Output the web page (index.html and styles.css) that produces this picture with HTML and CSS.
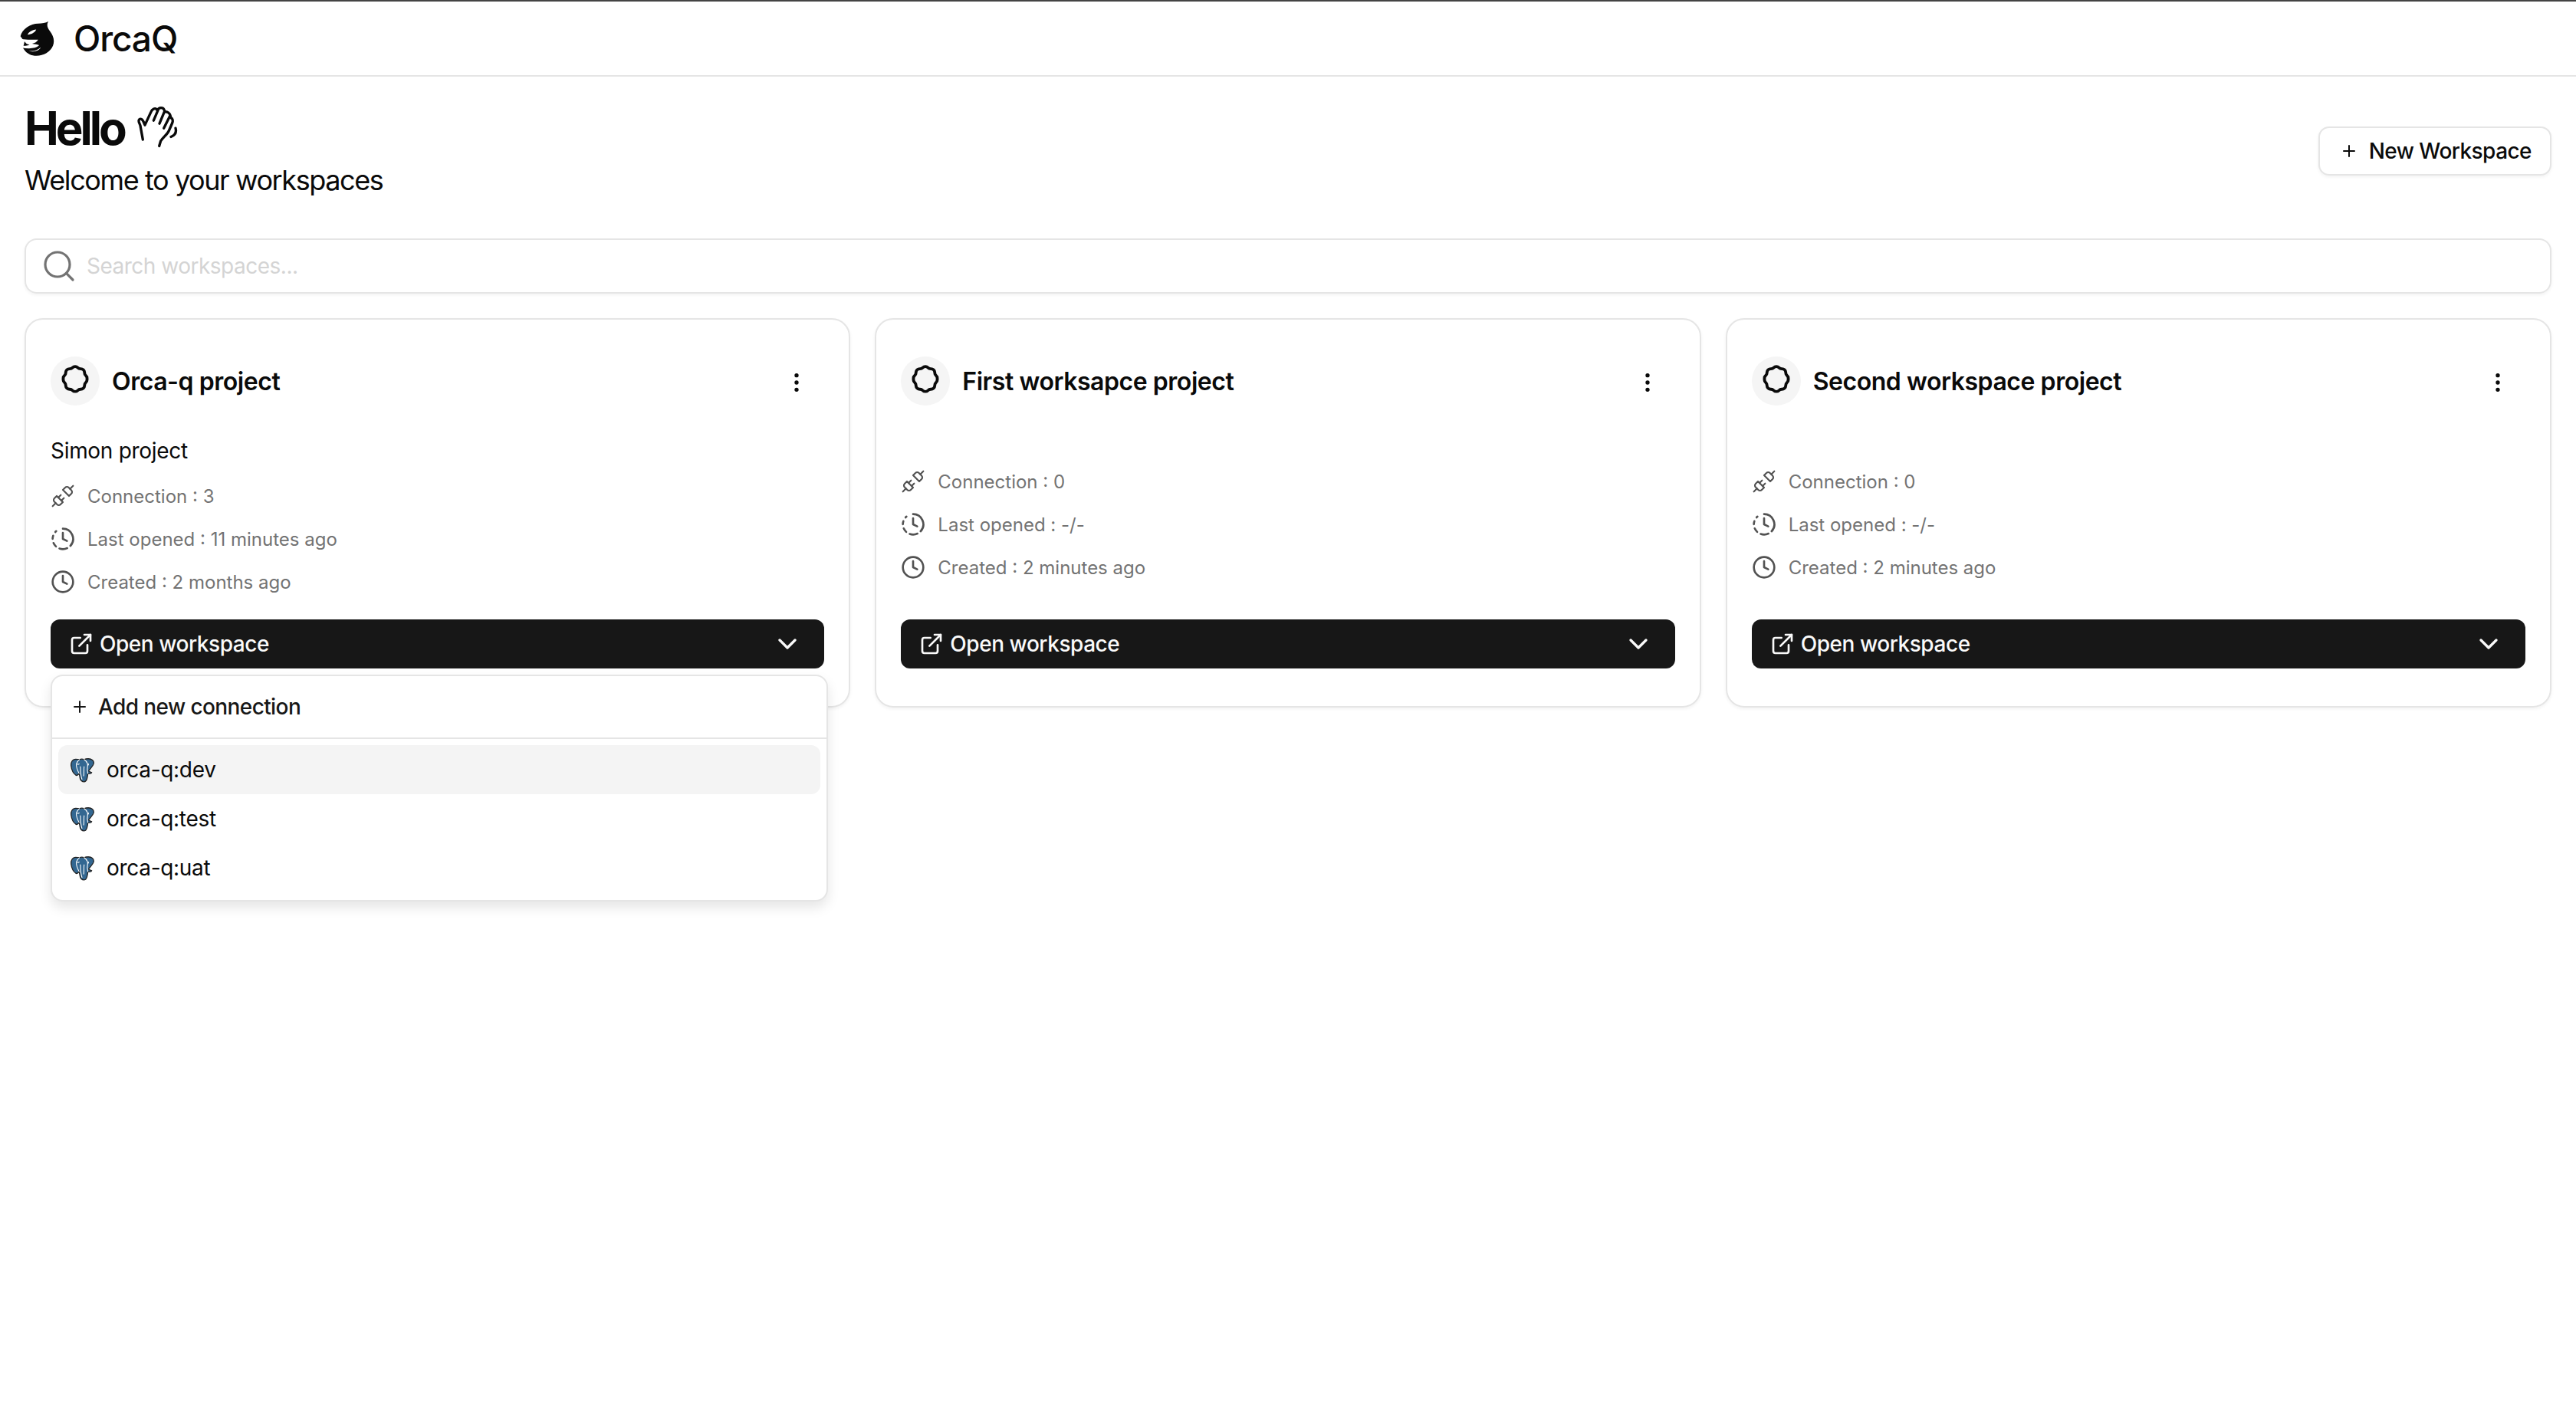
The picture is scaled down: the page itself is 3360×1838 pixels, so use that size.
FILE: index.html
```html
<!DOCTYPE html>
<html lang="en">
<head>
  <meta charset="UTF-8" />
  <title>OrcaQ</title>
  <link rel="stylesheet" href="styles.css">
</head>
<body>
  <svg class="icon-defs" width="0" height="0">
    <defs>
      <symbol id="i-badge" viewBox="0 0 24 24">
        <path d="M10.2 2.9a2.6 2.6 0 0 1 3.6 0 2.6 2.6 0 0 0 2 .8 2.6 2.6 0 0 1 2.6 2.5 2.6 2.6 0 0 0 .8 2 2.6 2.6 0 0 1 .9 2.1v.7a2.6 2.6 0 0 1-.9 2.1 2.6 2.6 0 0 0-.8 2 2.6 2.6 0 0 1-2.6 2.500 2.6 2.6 0 0 0-2 .8 2.6 2.6 0 0 1-3.6 0 2.6 2.6 0 0 0-2-.8 2.6 2.6 0 0 1-2.6-2.500 2.6 2.6 0 0 0-.8-2 2.6 2.6 0 0 1-.9-2.1v-.7a2.6 2.6 0 0 1 .9-2.1 2.6 2.6 0 0 0 .8-2 2.6 2.6 0 0 1 2.6-2.500 2.6 2.6 0 0 0 2-.8Z"/>
      </symbol>
      <symbol id="i-dots" viewBox="0 0 24 24">
        <circle cx="12" cy="5" r="1"/><circle cx="12" cy="12" r="1"/><circle cx="12" cy="19" r="1"/>
      </symbol>
      <symbol id="i-unplug" viewBox="0 0 24 24">
        <path d="m19 5 3-3"/><path d="m2 22 3-3"/>
        <path d="M6.3 20.3a2.4 2.4 0 0 0 3.4 0L12 18l-6-6-2.3 2.3a2.4 2.4 0 0 0 0 3.4Z"/>
        <path d="M7.5 13.5 10 11"/><path d="M10.5 16.5 13 14"/>
        <path d="m12 6 6 6 2.3-2.3a2.4 2.4 0 0 0 0-3.4l-2.6-2.6a2.4 2.4 0 0 0-3.4 0Z"/>
      </symbol>
      <symbol id="i-clock-fading" viewBox="0 0 24 24">
        <path d="M12 2a10 10 0 0 1 7.38 16.75"/><path d="M12 6v6l4 2"/>
        <path d="M2.5 8.875a10 10 0 0 0-.5 3"/><path d="M2.83 16a10 10 0 0 0 2.43 3.4"/>
        <path d="M4.636 5.235a10 10 0 0 1 .891-.857"/><path d="M8.644 21.42a10 10 0 0 0 7.631-.38"/>
      </symbol>
      <symbol id="i-clock" viewBox="0 0 24 24">
        <circle cx="12" cy="12" r="10"/><path d="M12 6v6l4 2"/>
      </symbol>
      <symbol id="i-external" viewBox="0 0 24 24">
        <path d="M15 3h6v6"/><path d="M10 14 21 3"/>
        <path d="M18 13v6a2 2 0 0 1-2 2H5a2 2 0 0 1-2-2V8a2 2 0 0 1 2-2h6"/>
      </symbol>
      <symbol id="i-chevron" viewBox="0 0 24 24">
        <path d="m6 9 6 6 6-6"/>
      </symbol>
      <symbol id="i-plus" viewBox="0 0 24 24">
        <path d="M5 12h14"/><path d="M12 5v14"/>
      </symbol>
      <symbol id="i-postgres" viewBox="0 0 32 32">
        <path class="pg-body" d="M8 3C4 3 2 7 2.500 11c.5 4 2.500 9 5.500 11 1 1 3 0 4-2 .5 2 1 4 1 5 .5 3 2 5 5 5s3.500-3 4-6l.5-4c1.500.5 4 .5 4.500-1-1-.5-3-1-3.500-2 1.500-2.500 5.500-6 6-9 .5-3-2.500-5.500-6.500-5.500-2 0-4 .5-5 1-1.500-.7-4-.7-5.500 0C11 3 9.500 3 8 3Z"/>
        <path class="pg-line" d="M12.500 3.500C9 6 8 10 9.500 14c1 3 1.500 4 2.500 6M18 3.500c3 2 5 5.500 4 9.500-.5 2 0 4 .5 7M13.500 12c.5 3 0 6 .5 8 .5 2.500.5 5 1.500 7M18 12c-.5 3 0 8-.5 11M23 8.500c.5.800.2 1.500-.5 1.500M10 9c1 .5 1.800.2 2-.5"/>
      </symbol>
    </defs>
  </svg>

  <header class="topbar">
    <svg class="logo" viewBox="18 18 136 140">
      <path d="M130 20c-8 12-4 24 6 38 14 18 20 38 12 58-10 26-42 42-72 39-20-2-36-13-46-31l6-24-16-22c6-28 40-50 70-50 15 0 30-2 40-8Z"/>
      <path class="logo-cut" d="M48 72c4-10 18-18 34-20-3 10-18 20-34 20Z"/>
      <path class="logo-cut" d="M16 86c16 8 46 4 74 6-4 8-14 14-24 16 10 2 20 2 28 6-14 14-42 14-66 10l-14-2 8-6c12 0 24 0 34-4-10-2-16-6-18-12-8 2-16-4-22-14Z"/>
      <path class="logo-cut" d="M54 134c14 6 32 0 46-12-6 14-32 22-46 12Z"/>
    </svg>
    <span class="brand">OrcaQ</span>
  </header>

  <main class="page">
    <section class="page-head">
      <div>
        <h1 class="hello">Hello
          <svg class="hand" viewBox="55 50 165 170">
            <path d="M80 185 70 130c-4-12-10-18-4-24 6-5 12 0 16 8l6 14 24-52c4-10 14-16 22-10l2 4c6-12 24-14 28 0l2 6c10-2 20 6 22 16l2 8c8 2 8 12 5 20l-13 30c-6 14-22 25-32 40l-6 20"/>
            <path d="m122 110 18-42"/><path d="m145 122 20-48"/><path d="m162 140 24-48"/>
            <path d="M208 140c4 15-2 28-18 34"/>
          </svg>
        </h1>
        <p class="welcome">Welcome to your workspaces</p>
      </div>
      <button class="btn-new">
        <svg class="ic ic-plus"><use href="#i-plus"/></svg>
        New Workspace
      </button>
    </section>

    <div class="search">
      <svg class="search-ic" viewBox="0 0 24 24"><circle cx="11" cy="11" r="8"/><path d="m21 21-4.300-4.300"/></svg>
      <input class="search-input" type="text" placeholder="Search workspaces...">
    </div>

    <section class="cards">
      <article class="card">
        <div class="card-head">
          <span class="avatar"><svg class="ic ic-badge"><use href="#i-badge"/></svg></span>
          <h2 class="card-title">Orca-q project</h2>
          <svg class="ic ic-dots"><use href="#i-dots"/></svg>
        </div>
        <p class="card-desc">Simon project</p>
        <ul class="meta">
          <li><svg class="ic ic-plug"><use href="#i-unplug"/></svg>Connection : 3</li>
          <li><svg class="ic"><use href="#i-clock-fading"/></svg>Last opened : 11 minutes ago</li>
          <li><svg class="ic"><use href="#i-clock"/></svg>Created : 2 months ago</li>
        </ul>
        <div class="open-wrap">
          <button class="btn-open">
            <svg class="ic"><use href="#i-external"/></svg>
            <span class="btn-open-label">Open workspace</span>
            <svg class="ic ic-chev"><use href="#i-chevron"/></svg>
          </button>
          <div class="menu">
            <div class="menu-add"><svg class="ic ic-add"><use href="#i-plus"/></svg>Add new connection</div>
            <div class="menu-list">
              <div class="menu-row active"><svg class="pg"><use href="#i-postgres"/></svg>orca-q:dev</div>
              <div class="menu-row"><svg class="pg"><use href="#i-postgres"/></svg>orca-q:test</div>
              <div class="menu-row"><svg class="pg"><use href="#i-postgres"/></svg>orca-q:uat</div>
            </div>
          </div>
        </div>
      </article>

      <article class="card">
        <div class="card-head">
          <span class="avatar"><svg class="ic ic-badge"><use href="#i-badge"/></svg></span>
          <h2 class="card-title">First worksapce project</h2>
          <svg class="ic ic-dots"><use href="#i-dots"/></svg>
        </div>
        <p class="card-desc"></p>
        <ul class="meta">
          <li><svg class="ic ic-plug"><use href="#i-unplug"/></svg>Connection : 0</li>
          <li><svg class="ic"><use href="#i-clock-fading"/></svg>Last opened : -/-</li>
          <li><svg class="ic"><use href="#i-clock"/></svg>Created : 2 minutes ago</li>
        </ul>
        <div class="open-wrap">
          <button class="btn-open">
            <svg class="ic"><use href="#i-external"/></svg>
            <span class="btn-open-label">Open workspace</span>
            <svg class="ic ic-chev"><use href="#i-chevron"/></svg>
          </button>
        </div>
      </article>

      <article class="card">
        <div class="card-head">
          <span class="avatar"><svg class="ic ic-badge"><use href="#i-badge"/></svg></span>
          <h2 class="card-title">Second workspace project</h2>
          <svg class="ic ic-dots"><use href="#i-dots"/></svg>
        </div>
        <p class="card-desc"></p>
        <ul class="meta">
          <li><svg class="ic ic-plug"><use href="#i-unplug"/></svg>Connection : 0</li>
          <li><svg class="ic"><use href="#i-clock-fading"/></svg>Last opened : -/-</li>
          <li><svg class="ic"><use href="#i-clock"/></svg>Created : 2 minutes ago</li>
        </ul>
        <div class="open-wrap">
          <button class="btn-open">
            <svg class="ic"><use href="#i-external"/></svg>
            <span class="btn-open-label">Open workspace</span>
            <svg class="ic ic-chev"><use href="#i-chevron"/></svg>
          </button>
        </div>
      </article>
    </section>
  </main>
</body>
</html>
```

FILE: styles.css
```css
* {
  box-sizing: border-box;
}

body {
  margin: 0;
  min-height: 100vh;
  background: #fff;
  color: #0a0a0a;
  font-family: Inter, "Liberation Sans", sans-serif;
  border-top: 2px solid #444;
}

.icon-defs {
  position: absolute;
}

.ic {
  width: 32px;
  height: 32px;
  flex: none;
  fill: none;
  stroke: currentColor;
  stroke-width: 2;
  stroke-linecap: round;
  stroke-linejoin: round;
}

/* top bar */
.topbar {
  display: flex;
  align-items: center;
  height: 98px;
  padding: 0 26px;
  gap: 25px;
  border-bottom: 2px solid #e5e5e5;
}

.logo {
  width: 45px;
  height: 47px;
  fill: #0a0a0a;
}

.logo-cut {
  fill: #fff;
}

.brand {
  font-size: 46px;
  font-weight: 500;
  letter-spacing: -1.1px;
}

.page {
  padding: 31px 32px 0;
}

/* heading */
.page-head {
  display: flex;
  justify-content: space-between;
  align-items: flex-start;
  margin-bottom: 44px;
}

.hello {
  display: flex;
  align-items: center;
  gap: 16px;
  margin: 0;
  font-size: 60px;
  line-height: 72px;
  font-weight: 700;
  letter-spacing: -4px;
}

.hand {
  width: 55px;
  height: 57px;
  margin-top: -4px;
  fill: none;
  stroke: #0a0a0a;
  stroke-width: 10;
  stroke-linecap: round;
  stroke-linejoin: round;
}

.welcome {
  margin: 0;
  font-size: 36px;
  line-height: 64px;
  letter-spacing: -1.4px;
}

.btn-new {
  display: flex;
  align-items: center;
  gap: 14px;
  height: 64px;
  margin-top: 34px;
  padding: 0 24px 0 26px;
  background: #fff;
  border: 2px solid #e5e5e5;
  border-radius: 14px;
  box-shadow: 0 2px 4px rgba(0, 0, 0, 0.05);
  color: #0a0a0a;
  font-family: inherit;
  font-size: 28px;
  font-weight: 500;
  letter-spacing: -0.55px;
}

.ic-plus {
  width: 24px;
  height: 24px;
}

/* search */
.search {
  display: flex;
  align-items: center;
  gap: 12px;
  height: 72px;
  padding: 0 19px;
  border: 2px solid #e5e5e5;
  border-radius: 16px;
  box-shadow: 0 2px 4px rgba(0, 0, 0, 0.05);
}

.search-ic {
  width: 48px;
  height: 48px;
  flex: none;
  fill: none;
  stroke: #737373;
  stroke-width: 1.6;
  stroke-linecap: round;
}

.search-input {
  flex: 1;
  border: none;
  outline: none;
  padding: 0;
  font-family: inherit;
  font-size: 28px;
  letter-spacing: -0.5px;
}

.search-input::placeholder {
  color: #d4d4d4;
}

/* cards */
.cards {
  display: grid;
  grid-template-columns: repeat(3, 1fr);
  gap: 32px;
  margin-top: 32px;
}

.card {
  display: flex;
  flex-direction: column;
  padding: 48px 32px 49px;
  border: 2px solid #e5e5e5;
  border-radius: 24px;
  box-shadow: 0 2px 4px rgba(0, 0, 0, 0.05);
}

.card-head {
  display: flex;
  align-items: center;
  gap: 16px;
  height: 64px;
}

.avatar {
  display: flex;
  align-items: center;
  justify-content: center;
  width: 64px;
  height: 64px;
  flex: none;
  background: #f5f5f5;
  border-radius: 50%;
}

.ic-badge {
  width: 46px;
  height: 46px;
}

.card-title {
  flex: 1;
  margin: 0;
  font-size: 32px;
  font-weight: 600;
  letter-spacing: -0.45px;
}

.ic-dots {
  margin-right: 20px;
  margin-top: 4px;
  fill: currentColor;
}

.card-desc {
  min-height: 21px;
  margin: 39px 0 0;
  font-size: 28px;
  line-height: 40px;
  letter-spacing: -0.3px;
}

.meta {
  list-style: none;
  margin: 11px 0 0;
  padding: 0;
}

.meta li {
  display: flex;
  align-items: center;
  gap: 16px;
  height: 56px;
  font-size: 24px;
  color: #737373;
}

.meta .ic {
  stroke: #525252;
}

.meta .ic-plug {
  stroke-width: 1.6;
}

.open-wrap {
  position: relative;
  margin-top: auto;
}

.btn-open {
  display: flex;
  align-items: center;
  gap: 8px;
  width: 100%;
  height: 64px;
  padding: 0 28px 0 24px;
  margin-top: 21px;
  background: #171717;
  border: none;
  border-radius: 12px;
  color: #fafafa;
  font-family: inherit;
  font-size: 28px;
  font-weight: 500;
  letter-spacing: -0.45px;
}

.btn-open-label {
  flex: 1;
  text-align: left;
}

.ic-chev {
  width: 40px;
  height: 40px;
}

/* dropdown */
.menu {
  position: absolute;
  top: calc(100% + 8px);
  left: 0;
  width: 1014px;
  background: #fff;
  border: 2px solid #e5e5e5;
  border-radius: 16px;
  box-shadow: 0 8px 16px rgba(0, 0, 0, 0.1);
  font-size: 28px;
}

.menu-add {
  display: flex;
  align-items: center;
  gap: 12px;
  height: 82px;
  padding: 0 24px;
  border-bottom: 2px solid #e5e5e5;
  font-weight: 500;
  color: #171717;
  letter-spacing: -0.6px;
}

.ic-add {
  width: 24px;
  height: 24px;
}

.menu-list {
  padding: 8px 8px 10px;
}

.menu-row {
  display: flex;
  align-items: center;
  gap: 14px;
  height: 64px;
  padding: 0 14px;
  border-radius: 12px;
  letter-spacing: -0.3px;
}

.menu-row.active {
  background: #f4f4f4;
}

.pg {
  width: 35px;
  height: 35px;
  flex: none;
}

.pg-body {
  fill: #336791;
  stroke: #222;
  stroke-width: 1.2;
}

.pg-line {
  fill: none;
  stroke: #fff;
  stroke-width: 1;
  stroke-linecap: round;
}
```
